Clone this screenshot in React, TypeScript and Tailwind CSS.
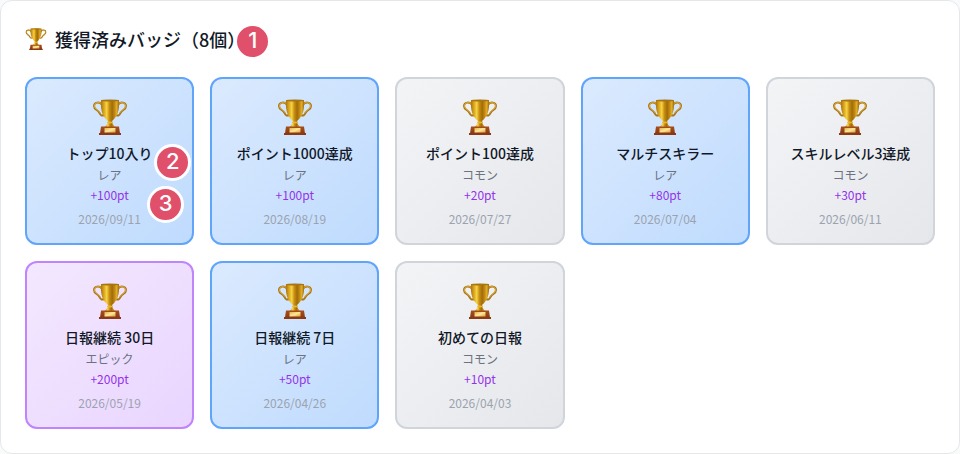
import React from "react";

type Rarity = "common" | "rare" | "epic";

type Badge = {
  name: string;
  rarity: Rarity;
  points: number;
  date: string;
  markers?: boolean;
};

const badges: Badge[] = [
  { name: "トップ10入り", rarity: "rare", points: 100, date: "2026/09/11", markers: true },
  { name: "ポイント1000達成", rarity: "rare", points: 100, date: "2026/08/19" },
  { name: "ポイント100達成", rarity: "common", points: 20, date: "2026/07/27" },
  { name: "マルチスキラー", rarity: "rare", points: 80, date: "2026/07/04" },
  { name: "スキルレベル3達成", rarity: "common", points: 30, date: "2026/06/11" },
  { name: "日報継続 30日", rarity: "epic", points: 200, date: "2026/05/19" },
  { name: "日報継続 7日", rarity: "rare", points: 50, date: "2026/04/26" },
  { name: "初めての日報", rarity: "common", points: 10, date: "2026/04/03" },
];

const rarityLabel: Record<Rarity, string> = {
  common: "コモン",
  rare: "レア",
  epic: "エピック",
};

const rarityStyle: Record<Rarity, string> = {
  common: "border-[#d1d5db] from-[#f3f4f6] to-[#e5e7eb]",
  rare: "border-[#60a5fa] from-[#dbeafe] to-[#bfdbfe]",
  epic: "border-[#c084fc] from-[#f3e8ff] to-[#e9d5ff]",
};

const App = () => {
  return (
    <div className="bg-gray-50 font-['Noto_Sans_CJK_JP',sans-serif]">
      <TrophyColors />
      <section className="rounded-xl border border-[#e5e7eb] bg-white p-6">
        <h2 className="mb-6 flex items-center text-lg font-medium text-[#111827]">
          <Trophy className="mr-2 size-[22px]" />
          <span className="relative">
            獲得済みバッジ（8個）
            <Marker label="1" className="absolute -top-0.5 -right-[26px]" />
          </span>
        </h2>
        <ul className="grid grid-cols-5 gap-4">
          {badges.map((badge) => (
            <BadgeCard key={badge.name} badge={badge} />
          ))}
        </ul>
      </section>
    </div>
  );
};

export default App;

const BadgeCard = ({ badge }: { badge: Badge }) => {
  return (
    <li
      className={`relative rounded-xl border-2 bg-linear-to-br p-4 text-center ${rarityStyle[badge.rarity]}`}
    >
      <div className="mb-2 flex h-10 items-end justify-center">
        <Trophy className="size-9" />
      </div>
      <h3 className="text-sm font-medium text-[#111827]">{badge.name}</h3>
      <p className="mt-1 text-xs text-[#6b7280]">{rarityLabel[badge.rarity]}</p>
      <p className="mt-1 text-xs text-[#9333ea]">+{badge.points}pt</p>
      <p className="mt-2 text-xs text-[#9ca3af]">{badge.date}</p>
      {badge.markers && (
        <>
          <Marker label="2" className="absolute top-[65px] right-px" />
          <Marker label="3" className="absolute top-[107px] right-2" />
        </>
      )}
    </li>
  );
};

// numbered callout
const Marker = ({ label, className }: { label: string; className: string }) => {
  return (
    <span
      className={`flex size-[37px] items-center justify-center rounded-full border-3 border-white bg-[#e0506a] pb-0.5 font-[Inter,sans-serif] text-[22px] font-medium text-white ${className}`}
    >
      {label}
    </span>
  );
};

const TrophyColors = () => {
  return (
    <svg className="absolute size-0" aria-hidden="true">
      <defs>
        <linearGradient id="cup" x1="0" x2="1" y1="0" y2="0">
          <stop offset="0" stopColor="#a87312" />
          <stop offset="0.16" stopColor="#d9a21c" />
          <stop offset="0.32" stopColor="#f6d544" />
          <stop offset="0.46" stopColor="#c98f12" />
          <stop offset="0.62" stopColor="#a06c0a" />
          <stop offset="0.76" stopColor="#c48b12" />
          <stop offset="0.87" stopColor="#e3b02a" />
          <stop offset="1" stopColor="#9a680c" />
        </linearGradient>
        <linearGradient id="base" x1="0" x2="0" y1="0" y2="1">
          <stop offset="0" stopColor="#a94f1d" />
          <stop offset="1" stopColor="#8a3914" />
        </linearGradient>
        <linearGradient id="plate" x1="0" x2="1" y1="0" y2="1">
          <stop offset="0" stopColor="#e3b04a" />
          <stop offset="0.5" stopColor="#ffe69a" />
          <stop offset="1" stopColor="#dba23c" />
        </linearGradient>
      </defs>
    </svg>
  );
};

const Trophy = ({ className }: { className: string }) => {
  return (
    <svg viewBox="0 0 72 72" className={className} aria-hidden="true">
      <g fill="none" strokeLinecap="round">
        <path d="M20 11C15 5 4 6 4 14c0 8 8 7 11 14 2 5 5 6 9 4" stroke="#a87618" strokeWidth="4" />
        <path d="M52 11c5-6 16-5 16 3 0 8-8 7-11 14-2 5-5 6-9 4" stroke="#a87618" strokeWidth="4" />
        <path d="M20 10C15 5 5 6 5 14c0 7 8 7 11 13" stroke="#dfac35" strokeWidth="2" />
        <path d="M52 10c5-5 15-4 15 4 0 7-8 7-11 13" stroke="#dfac35" strokeWidth="2" />
      </g>
      <path d="M32 42h8l1 7c1 3 4 5 7 8H24c3-3 6-5 7-8z" fill="url(#cup)" />
      <path d="M18 2h36c1 16-1 28-9 37-2 3-5 6-9 6s-7-3-9-6C19 30 17 18 18 2z" fill="url(#cup)" />
      <ellipse cx="36" cy="3" rx="18" ry="2" fill="#a87510" />
      <ellipse cx="36" cy="47" rx="6" ry="2" fill="#e8b52c" />
      <path d="M18 55h36l2 14H16z" fill="url(#base)" />
      <path d="M14 68h44v4H14z" fill="#8a3914" />
      <path d="M25 58h22v9H25z" fill="url(#plate)" />
    </svg>
  );
};
